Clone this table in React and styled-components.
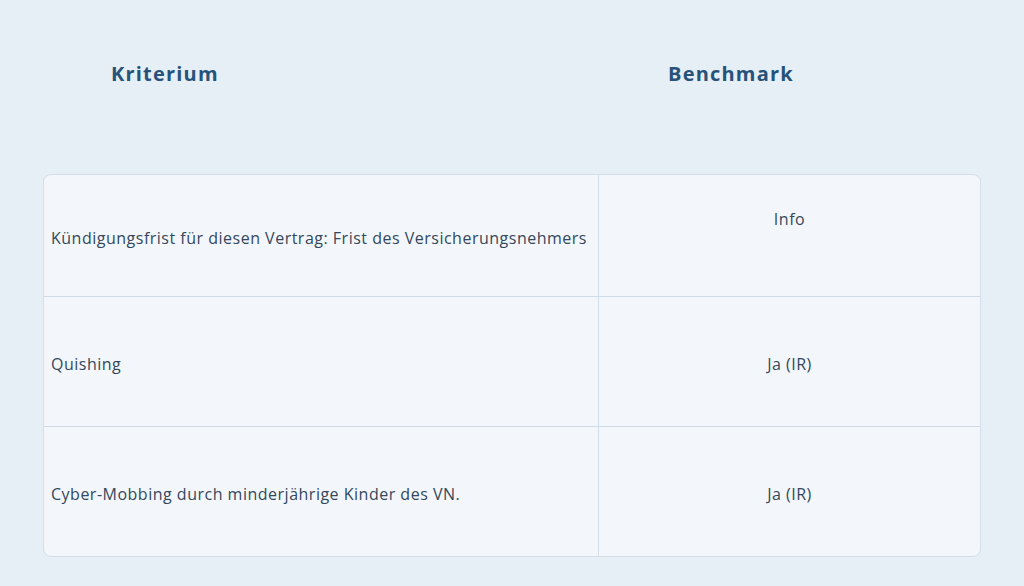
import React from 'react';
import styled, { createGlobalStyle } from 'styled-components';

const rows = [
    { label: 'Kündigungsfrist für diesen Vertrag: Frist des Versicherungsnehmers', value: 'Info', top: true, height: 121 },
    { label: 'Quishing', value: 'Ja (IR)', height: 129 },
    { label: 'Cyber-Mobbing durch minderjährige Kinder des VN.', value: 'Ja (IR)', height: 129 },
];

const App = () => {
    return (
        <Page>
            <Global />
            <Header>
                <HeadCell $width={557}>Kriterium</HeadCell>
                <HeadCell>Benchmark</HeadCell>
            </Header>
            <Table>
                {rows.map((row, i) => (
                    <Row key={i} $height={row.height} $last={i === rows.length - 1}>
                        <LabelCell>{row.label}</LabelCell>
                        <ValueCell $top={row.top}>{row.value}</ValueCell>
                    </Row>
                ))}
            </Table>
        </Page>
    );
};

const Global = createGlobalStyle`
body{
    margin:0;
    background:#e6eef6;
    font-family:'Open Sans', 'Liberation Sans', sans-serif;
}
`
const Page = styled.div`
width:1024px;
height:586px;
padding:60px 43px 0;
box-sizing:border-box;
background:#e6eef6;
`
const Header = styled.div`
display:flex;
padding-left:68px;
height:114px;
`
const HeadCell = styled.div`
width:${p => p.$width ? p.$width + 'px' : 'auto'};
font-size:20px;
line-height:28px;
font-weight:700;
color:#275279;
letter-spacing:1.2px;
`
const Table = styled.div`
background:#f3f7fb;
border:1px solid #d3dee8;
border-radius:8px;
overflow:hidden;
`
const Row = styled.div`
display:grid;
grid-template-columns:555px 1fr;
height:${p => p.$height}px;
border-bottom:${p => p.$last ? 'none' : '1px solid #cfdbe7'};
`
const LabelCell = styled.div`
display:flex;
align-items:center;
padding:5px 0 0 7px;
border-right:1px solid #d3dee8;
font-size:16px;
color:#34475c;
letter-spacing:0.5px;
`
const ValueCell = styled.div`
display:flex;
justify-content:center;
align-items:${p => p.$top ? 'flex-start' : 'center'};
padding-top:${p => p.$top ? '33px' : '5px'};
font-size:16px;
color:#34475c;
letter-spacing:0.5px;
`

export default App;
